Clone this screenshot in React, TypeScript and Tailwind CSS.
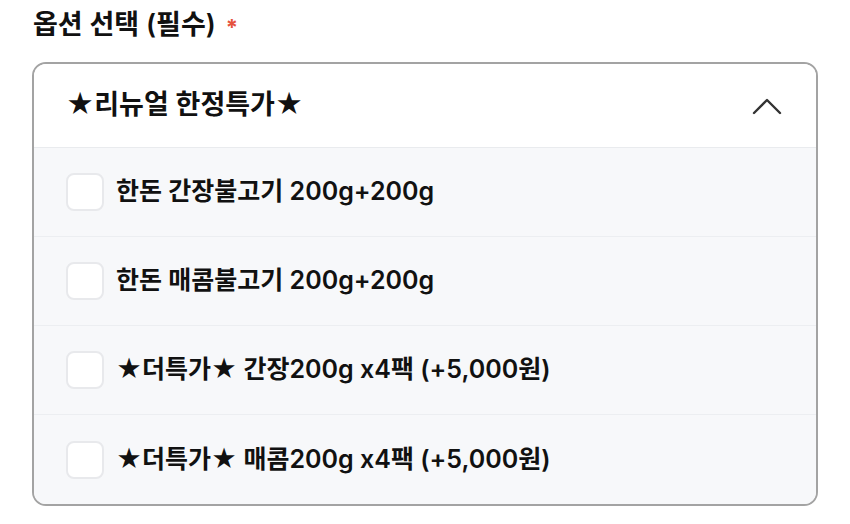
const options = [
	'한돈 간장불고기 200g+200g',
	'한돈 매콤불고기 200g+200g',
	'★더특가★ 간장200g x4팩 (+5,000원)',
	'★더특가★ 매콤200g x4팩 (+5,000원)',
];

export default function App()
{
	return (
		<div className="w-[850px] h-[524px] bg-white px-8 pt-[6px] text-[#111] font-['Inter','Noto_Sans_CJK_KR',sans-serif]">
			<div className="flex items-center h-[38px] pl-[1px]">
				<span className="text-[27px] font-semibold">옵션 선택 (필수)</span>
				<span className="ml-[10px] mt-[4px] text-[22px] font-bold text-[#e5533d] leading-none">*</span>
			</div>

			<div className="mt-[18px] w-[786px] border-2 border-[#a3a3a3] rounded-[14px] overflow-hidden">
				<div className="flex items-center justify-between h-[84px] pl-8 pr-[34px] bg-white border-b border-[#e9ebee]">
					<span className="text-[27px] font-semibold">★리뉴얼 한정특가★</span>
					<svg width="30" height="18" viewBox="0 0 30 18" fill="none" stroke="#333" strokeWidth="2.4" strokeLinecap="round" strokeLinejoin="round">
						<polyline points="2,16 15,3 28,16" />
					</svg>
				</div>
				{options.map((o, i) => (
					<label key={o} className={`flex items-center h-[89px] pl-8 bg-[#f7f8fa] ${i < options.length - 1 ? 'border-b border-[#eceef1]' : ''}`}>
						<input type="checkbox" className="appearance-none w-[38px] h-[38px] rounded-[8px] border-2 border-[#e8e9ec] bg-white" />
						<span className="ml-[12px] text-[25px] font-semibold">{o}</span>
					</label>
				))}
			</div>
		</div>
	);
}
